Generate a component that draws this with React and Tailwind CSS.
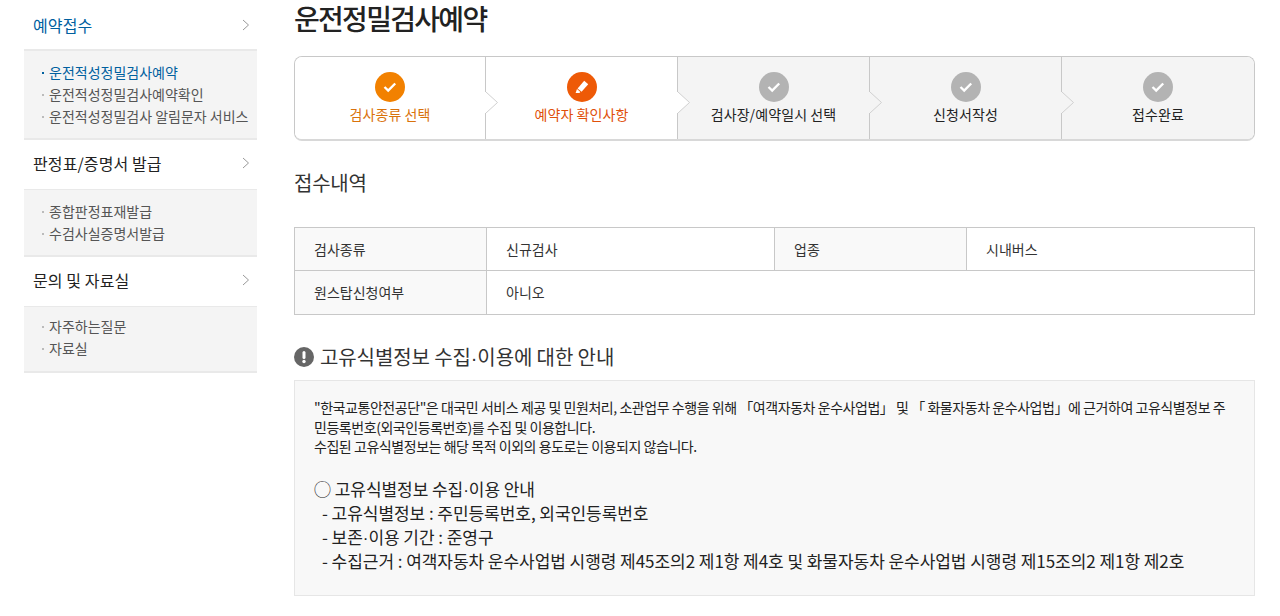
const F = '"Noto Sans CJK KR","Liberation Sans",sans-serif';

function Chevron() {
  return (
    <svg width="8" height="12" viewBox="0 0 8 12" fill="none" stroke="#999" strokeWidth="1">
      <path d="M1 1l5.5 5L1 11" />
    </svg>
  );
}

function Section({ title, active, h, extra }) {
  return (
    <div className={`flex items-center justify-between pl-[9px] pr-[7px] border-[#e9e9e9] ${active ? 'border-b-2 text-[#00609f]' : 'border-b text-[#222]'} ${h} ${extra}`}>
      <span className="text-[16px] tracking-[0.1px]">{title}</span>
      <Chevron />
    </div>
  );
}

function Sub({ items, py }) {
  return (
    <ul className={`bg-[#f4f4f4] border-b-2 border-[#e9e9e9] pl-[18px] ${py}`}>
      {items.map((t) => (
        <li key={t} className={`h-[22px] leading-[22px] text-[14px] flex items-center ${t === '운전적성정밀검사예약' ? 'text-[#00609f]' : 'text-[#555]'}`}>
          <span className={`w-[2px] h-[2px] mr-[5px] mt-[2px] ${t === '운전적성정밀검사예약' ? 'bg-[#00609f]' : 'bg-[#bbb]'}`} />
          {t}
        </li>
      ))}
    </ul>
  );
}

function Step({ label, state, w, last }) {
  const circle = state === 'done' ? 'bg-[#f28100]' : state === 'cur' ? 'bg-[#ee5a07]' : 'bg-[#b3b3b3]';
  const text = state === 'done' ? 'text-[#d9720b]' : state === 'cur' ? 'text-[#e0500a]' : 'text-[#222]';
  const fill = state === 'todo' ? '#f4f4f4' : '#ffffff';
  return (
    <div className={`relative h-full flex flex-col items-center pt-[15px] ${w} ${state === 'todo' ? 'bg-[#f4f4f4]' : 'bg-white'} ${last ? '' : 'border-r border-[#c8c8c8]'}`}>
      <div className={`w-[30px] h-[30px] rounded-full flex items-center justify-center ${circle}`}>
        {state === 'cur' ? (
          <svg width="18" height="18" viewBox="0 0 18 18" fill="#fff">
            <path d="M11.2 2.8l4 3.400-6.600 7.600-4-3.400z" />
            <path d="M4 11l3.400 3-1 1H2.600z" />
          </svg>
        ) : (
          <svg width="16" height="14" viewBox="0 0 16 14" fill="none" stroke="#fff" strokeWidth="2.400">
            <path d="M2.500 7l3.700 3.500 7-7" />
          </svg>
        )}
      </div>
      <div className={`mt-[1px] text-[14px] leading-[22px] tracking-[0.1px] ${text}`}>{label}</div>
      {!last && (
        <svg className="absolute right-[-13px] top-[35px] z-10" width="13" height="21" viewBox="0 0 13 21">
          <path d="M0 0H1L12.500 10.500 1 21H0z" fill={fill} />
          <path d="M1 0L12.500 10.500 1 21" fill="none" stroke="#d0d0d0" />
        </svg>
      )}
    </div>
  );
}

function Row({ cells }) {
  return (
    <div className="flex h-[43px] border-b border-[#c8c8c8] last:border-b-0 text-[14px] text-[#333]">
      {cells.map(([t, w, head], i) => (
        <div key={t} className={`flex items-center pl-[19px] ${w} ${head ? 'bg-[#f9f9f9]' : 'bg-white'} ${i < cells.length - 1 ? 'border-r border-[#c8c8c8]' : ''}`}>{t}</div>
      ))}
    </div>
  );
}

const Dot = () => <span className="font-['Liberation_Sans'] leading-[0]">·</span>;

export default function App() {
  return (
    <div className="w-[1280px] h-[616px] overflow-hidden bg-white flex" style={{ fontFamily: F }}>
      <aside className="w-[233px] ml-[24px] mt-[3px] shrink-0">
        <Section title="예약접수" active h="h-[48px]" extra="pb-[2px]" />
        <Sub py="pt-[10px] pb-[11px]" items={['운전적성정밀검사예약', '운전적성정밀검사예약확인', '운전적성정밀검사 알림문자 서비스']} />
        <Section title="판정표/증명서 발급" h="h-[50px]" extra="pb-[4px]" />
        <Sub py="pt-[10px] pb-[11px]" items={['종합판정표재발급', '수검사실증명서발급']} />
        <Section title="문의 및 자료실" h="h-[50px]" extra="pb-[4px]" />
        <Sub py="pt-[8px] pb-[12px]" items={['자주하는질문', '자료실']} />
      </aside>
      <main className="w-[961px] ml-[37px] shrink-0">
        <h1 className="text-[28px] leading-[36px] font-medium tracking-[-1.7px] text-[#222]">운전정밀검사예약</h1>
        <div className="mt-[20px] h-[85px] flex border border-[#c8c8c8] border-b-2 border-b-[#d8d8d8] rounded-[8px] overflow-hidden">
          <Step label="검사종류 선택" state="done" w="w-[191px]" />
          <Step label="예약자 확인사항" state="cur" w="w-[192px]" />
          <Step label="검사장/예약일시 선택" state="todo" w="w-[192px]" />
          <Step label="신청서작성" state="todo" w="w-[192px]" />
          <Step label="접수완료" state="todo" w="flex-1" last />
        </div>
        <h2 className="mt-[28px] text-[20px] leading-[28px] tracking-[-0.25px] text-[#333]">접수내역</h2>
        <div className="mt-[30px] border border-[#c8c8c8]">
          <Row cells={[['검사종류', 'w-[192px]', true], ['신규검사', 'w-[288px]'], ['업종', 'w-[192px]', true], ['시내버스', 'flex-1']]} />
          <Row cells={[['원스탑신청여부', 'w-[192px]', true], ['아니오', 'flex-1']]} />
        </div>
        <div className="mt-[28px] flex items-center h-[28px]">
          <svg width="20" height="20" viewBox="0 0 20 20" className="mr-[6px]">
            <circle cx="10" cy="10" r="10" fill="#666" />
            <rect x="8.500" y="4" width="3" height="8" rx="1.500" fill="#fff" />
            <circle cx="10" cy="14.500" r="1.700" fill="#fff" />
          </svg>
          <span className="text-[20px] tracking-[-0.1px] text-[#333]">고유식별정보 수집<Dot />이용에 대한 안내</span>
        </div>
        <div className="mt-[9px] h-[216px] bg-[#f8f8f8] border border-[#e6e6e6] pl-[19px] pr-[20px] pt-[17px]">
          <p className="text-[14px] leading-[19.5px] tracking-[-0.45px] text-[#222]">
            "한국교통안전공단"은 대국민 서비스 제공 및 민원처리, 소관업무 수행을 위해 「여객자동차 운수사업법」 및 「 화물자동차 운수사업법」에 근거하여 고유식별정보 주
            <br />
            민등록번호(외국인등록번호)를 수집 및 이용합니다.
            <br />
            수집된 고유식별정보는 해당 목적 이외의 용도로는 이용되지 않습니다.
          </p>
          <div className="mt-[20px] text-[17px] leading-[24px] tracking-[-0.05px] text-[#222]">
            <div>◯ 고유식별정보 수집<Dot />이용 안내</div>
            <div className="pl-[8px]">- 고유식별정보 : 주민등록번호, 외국인등록번호</div>
            <div className="pl-[8px]">- 보존<Dot />이용 기간 : 준영구</div>
            <div className="pl-[8px]">- 수집근거 : 여객자동차 운수사업법 시행령 제45조의2 제1항 제4호 및 화물자동차 운수사업법 시행령 제15조의2 제1항 제2호</div>
          </div>
        </div>
      </main>
    </div>
  );
}
